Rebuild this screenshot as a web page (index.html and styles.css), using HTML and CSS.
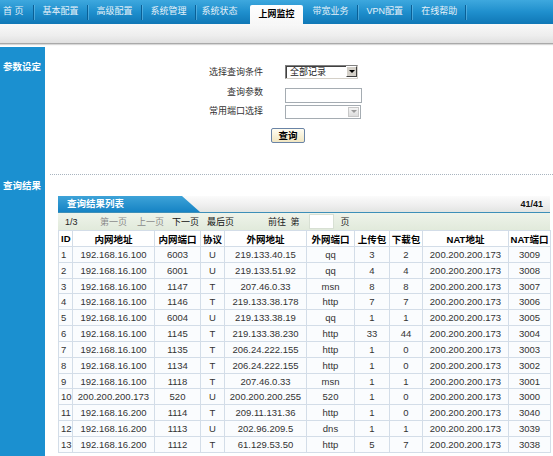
FILE: index.html
```html
<!DOCTYPE html>
<html lang="zh-CN">
<head>
<meta charset="utf-8">
<title>上网监控</title>
<link rel="stylesheet" href="styles.css">
</head>
<body>
<div class="topnav">
  <ul class="tabs">
    <li class="tab first">首 页</li>
    <li class="tab">基本配置</li>
    <li class="tab">高级配置</li>
    <li class="tab">系统管理</li>
    <li class="tab pre-active">系统状态</li>
    <li class="tab active">上网监控</li>
    <li class="tab post-active">带宽业务</li>
    <li class="tab">VPN配置</li>
    <li class="tab last">在线帮助</li>
  </ul>
</div>
<div class="subbar"></div>
<div class="page">
  <section class="sec sec-params">
    <div class="side">参数设定</div>
    <div class="content params-content">
      <div class="qform">
        <label class="lbl">选择查询条件</label>
        <div class="fsel dark"><span class="fsel-text">全部记录</span><span class="fsel-btn"><i></i></span></div>
        <label class="lbl">查询参数</label>
        <div class="finput"></div>
        <label class="lbl">常用端口选择</label>
        <div class="fsel light"><span class="fsel-text"></span><span class="fsel-btn"><i></i></span></div>
        <div class="btnrow"><button class="qbtn" type="button">查询</button></div>
      </div>
    </div>
  </section>
  <section class="sec sec-results">
    <div class="side">查询结果</div>
    <div class="content results-content">
      <div class="panel">
        <div class="ptitle">
          <div class="ptab">查询结果列表</div>
          <div class="pcount">41/41</div>
        </div>
        <div class="pager">
          <span class="pg-num">1/3</span>
          <span class="pg-dis">第一页</span>
          <span class="pg-dis">上一页</span>
          <span class="pg-on">下一页</span>
          <span class="pg-on">最后页</span>
          <span class="pg-go">前往 第</span>
          <span class="pg-input"></span>
          <span class="pg-page">页</span>
        </div>
        <table class="grid">
          <colgroup>
            <col class="c-id"><col class="c-ip"><col class="c-port"><col class="c-proto"><col class="c-ip"><col class="c-wport"><col class="c-up"><col class="c-down"><col class="c-nat"><col class="c-natport">
          </colgroup>
          <thead>
            <tr><th class="id">ID</th><th>内网地址</th><th>内网端口</th><th>协议</th><th>外网地址</th><th>外网端口</th><th>上传包</th><th>下载包</th><th>NAT地址</th><th>NAT端口</th></tr>
          </thead>
          <tbody>
            <tr><td class="id">1</td><td>192.168.16.100</td><td>6003</td><td>U</td><td>219.133.40.15</td><td>qq</td><td>3</td><td>2</td><td>200.200.200.173</td><td>3009</td></tr>
            <tr><td class="id">2</td><td>192.168.16.100</td><td>6001</td><td>U</td><td>219.133.51.92</td><td>qq</td><td>4</td><td>4</td><td>200.200.200.173</td><td>3008</td></tr>
            <tr><td class="id">3</td><td>192.168.16.100</td><td>1147</td><td>T</td><td>207.46.0.33</td><td>msn</td><td>8</td><td>8</td><td>200.200.200.173</td><td>3007</td></tr>
            <tr><td class="id">4</td><td>192.168.16.100</td><td>1146</td><td>T</td><td>219.133.38.178</td><td>http</td><td>7</td><td>7</td><td>200.200.200.173</td><td>3006</td></tr>
            <tr><td class="id">5</td><td>192.168.16.100</td><td>6004</td><td>U</td><td>219.133.38.19</td><td>qq</td><td>1</td><td>1</td><td>200.200.200.173</td><td>3005</td></tr>
            <tr><td class="id">6</td><td>192.168.16.100</td><td>1145</td><td>T</td><td>219.133.38.230</td><td>http</td><td>33</td><td>44</td><td>200.200.200.173</td><td>3004</td></tr>
            <tr><td class="id">7</td><td>192.168.16.100</td><td>1135</td><td>T</td><td>206.24.222.155</td><td>http</td><td>1</td><td>0</td><td>200.200.200.173</td><td>3003</td></tr>
            <tr><td class="id">8</td><td>192.168.16.100</td><td>1134</td><td>T</td><td>206.24.222.155</td><td>http</td><td>1</td><td>0</td><td>200.200.200.173</td><td>3002</td></tr>
            <tr><td class="id">9</td><td>192.168.16.100</td><td>1118</td><td>T</td><td>207.46.0.33</td><td>msn</td><td>1</td><td>1</td><td>200.200.200.173</td><td>3001</td></tr>
            <tr><td class="id">10</td><td>200.200.200.173</td><td>520</td><td>U</td><td>200.200.200.255</td><td>520</td><td>1</td><td>0</td><td>200.200.200.173</td><td>3000</td></tr>
            <tr><td class="id">11</td><td>192.168.16.200</td><td>1114</td><td>T</td><td>209.11.131.36</td><td>http</td><td>1</td><td>0</td><td>200.200.200.173</td><td>3040</td></tr>
            <tr><td class="id">12</td><td>192.168.16.200</td><td>1113</td><td>U</td><td>202.96.209.5</td><td>dns</td><td>1</td><td>1</td><td>200.200.200.173</td><td>3039</td></tr>
            <tr><td class="id">13</td><td>192.168.16.200</td><td>1112</td><td>T</td><td>61.129.53.50</td><td>http</td><td>5</td><td>7</td><td>200.200.200.173</td><td>3038</td></tr>
          </tbody>
        </table>
      </div>
    </div>
  </section>
</div>
</body>
</html>
```

FILE: styles.css
```css
* { box-sizing: border-box; }
html, body { margin: 0; padding: 0; }
body {
  width: 553px;
  height: 456px;
  overflow: hidden;
  background: #fff;
  font-family: "Liberation Sans", "Noto Sans CJK SC", sans-serif;
  font-size: 9px;
  color: #333;
}

/* ---------- top navigation ---------- */
.topnav {
  height: 24px;
  background: linear-gradient(#3ea8de 0%, #1f8fcd 50%, #0f77b6 100%);
}
.tabs {
  list-style: none;
  margin: 0;
  padding: 0;
  display: flex;
  height: 24px;
  align-items: flex-end;
}
.tab {
  position: relative;
  height: 24px;
  line-height: 22px;
  padding: 0 9px;
  color: #e6f1f8;
  white-space: nowrap;
}
.tab::after {
  content: "";
  position: absolute;
  right: 0;
  top: 5px;
  width: 1px;
  height: 15px;
  background: #0a5f95;
  box-shadow: 1px 0 0 rgba(120, 195, 235, 0.5);
}
.tab.first { padding: 0 10px 0 3px; }
.tab.pre-active { padding: 0 11px 0 6px; }
.tab.pre-active::after, .tab.active::after { display: none; }
.tab.active {
  height: 19px;
  line-height: 18px;
  margin-left: 1px;
  padding: 0 8px 0 9px;
  background: linear-gradient(#ffffff, #f7f7f7);
  color: #000;
  font-weight: bold;
  border-radius: 2px 2px 0 0;
}
.tab.post-active { padding-left: 10px; }

.subbar {
  height: 20px;
  background: linear-gradient(#f8f8f8 0%, #eeeeee 60%, #e0e0e0 100%);
  border-bottom: 1px solid #a9a9a9;
  box-shadow: 0 1px 1px #d8d8d8;
  margin-bottom: 3px;
}

/* ---------- page sections ---------- */
.sec {
  display: flex;
}
.side {
  width: 45px;
  flex: none;
  background: #1b90d0;
  color: #fff;
  font-weight: bold;
  font-size: 9.5px;
  line-height: 12px;
  padding-left: 3px;
}
.sec-params .side { padding-top: 14px; }
.sec-results .side { padding-top: 5px; }
.sec-results { height: 282px; }
.content { flex: 1; min-width: 0; }

.params-content {
  height: 128px;
  padding-top: 18px;
  margin-left: 5px;
  border-bottom: 1px dotted #a8b4bf;
}

.qform {
  display: grid;
  grid-template-columns: 80px 76px;
  grid-auto-rows: 15px;
  column-gap: 22px;
  row-gap: 4.5px;
  margin-left: 133px;
}
.lbl {
  text-align: right;
  line-height: 15px;
  color: #333;
}
.fsel {
  display: flex;
  height: 14px;
  background: #fff;
}
.fsel.dark {
  border: 1px solid #808080;
  border-right-color: #d4d0c8;
  border-bottom-color: #d4d0c8;
  box-shadow: inset 1px 1px 0 #404040;
  width: 73px;
}
.fsel.light {
  border: 1px solid #a5acb2;
  width: 76px;
  margin-top: 0.5px;
}
.fsel-text {
  flex: 1;
  line-height: 12px;
  padding-left: 4px;
  color: #222;
}
.fsel-btn {
  width: 11px;
  margin: 1px;
  display: flex;
  align-items: center;
  justify-content: center;
  background: #d4d0c8;
  border: 1px solid;
  border-color: #fff #404040 #404040 #fff;
}
.fsel.dark .fsel-btn { margin: 0; height: 11px; }
.fsel-btn i {
  width: 0;
  height: 0;
  border-left: 3px solid transparent;
  border-right: 3px solid transparent;
  border-top: 3px solid #000;
}
.fsel.light .fsel-btn {
  background: linear-gradient(#f4f4f4, #dcdcdc);
  border: 1px solid #c8c8c8;
}
.fsel.light .fsel-btn i { border-top-color: #9a9a9a; }
.finput {
  height: 15px;
  width: 77px;
  border: 1px solid #a5acb2;
  background: #fff;
  margin-top: 3px;
}
.btnrow {
  grid-column: 1 / 3;
  padding-left: 88px;
  margin-top: 4.5px;
}
.qbtn {
  width: 34px;
  height: 15px;
  padding: 0;
  font: bold 9.5px "Liberation Sans", "Noto Sans CJK SC", sans-serif;
  color: #000;
  background: linear-gradient(#fffdf3, #f1e6c2);
  border: 1px solid #6a84a6;
  border-radius: 2px;
  line-height: 13px;
}

/* ---------- results panel ---------- */
.results-content {
  padding: 21px 3px 0 13px;
}
.panel {
  width: 492px;
}
.ptitle {
  display: flex;
  justify-content: space-between;
  height: 17px;
  background: linear-gradient(#fbfbfb 0%, #eeeeee 60%, #e2e4e2 100%);
  border-bottom: 1px solid #3d8fb8;
}
.ptab {
  width: 142px;
  height: 16px;
  padding-left: 9px;
  line-height: 15px;
  color: #fff;
  font-weight: bold;
  font-size: 9.5px;
  background: linear-gradient(#3ea3d8, #1683c4);
  clip-path: polygon(0 0, 124px 0, 142px 16px, 0 16px);
}
.pcount {
  padding-right: 7px;
  line-height: 16px;
  font-weight: bold;
  color: #111;
}
.pager {
  display: flex;
  align-items: center;
  height: 17px;
  padding-left: 7px;
  background: linear-gradient(#eef3ea, #e1eadb);
  color: #222;
}
.pg-num { width: 35px; }
.pg-dis { color: #8a8a8a; margin-right: 10px; }
.pg-dis + .pg-dis { margin-right: 8px; }
.pg-on { margin-right: 8px; color: #111; }
.pg-go { margin-left: 26px; word-spacing: 2px; }
.pg-input {
  width: 25px;
  height: 15px;
  margin-left: 9px;
  background: #fff;
  border: 1px solid #d8e0d4;
}
.pg-page { margin-left: 7px; }

.grid {
  width: 492px;
  table-layout: fixed;
  border-collapse: collapse;
  background: #fafcfe;
}
.c-id { width: 14px; }
.c-ip { width: 82px; }
.c-port { width: 46px; }
.c-proto { width: 24px; }
.c-wport { width: 48px; }
.c-up { width: 35px; }
.c-down { width: 33px; }
.c-nat { width: 86px; }
.c-natport { width: 42px; }
.grid th, .grid td {
  border: 1px solid #d3dde8;
  padding: 0;
  text-align: center;
  white-space: nowrap;
  overflow: hidden;
}
.grid th {
  height: 16px;
  font-weight: bold;
  font-size: 9.5px;
  color: #000;
  background: #fff;
}
.grid td {
  height: 15.83px;
  font-size: 9.5px;
  color: #333;
}
.grid .id { text-align: left; padding-left: 2px; }
```
